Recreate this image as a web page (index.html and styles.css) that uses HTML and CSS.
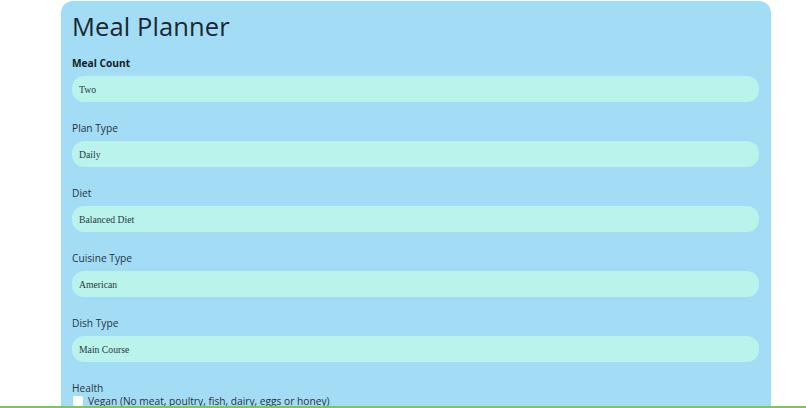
FILE: index.html
```html
<!DOCTYPE html>
<html lang="en">
<head>
<meta charset="utf-8">
<title>Meal Planner</title>
<link rel="stylesheet" href="styles.css">
</head>
<body>
<main class="card">
  <h1 class="title">Meal Planner</h1>
  <form class="form">
    <label class="label label-bold" for="count">Meal Count</label>
    <select class="field" id="count"><option>Two</option></select>

    <label class="label" for="plan">Plan Type</label>
    <select class="field" id="plan"><option>Daily</option></select>

    <label class="label" for="diet">Diet</label>
    <select class="field" id="diet"><option>Balanced Diet</option></select>

    <label class="label" for="cuisine">Cuisine Type</label>
    <select class="field" id="cuisine"><option>American</option></select>

    <label class="label" for="dish">Dish Type</label>
    <select class="field" id="dish"><option>Main Course</option></select>

    <div class="label">Health</div>
    <label class="check-row"><input type="checkbox" class="check"> Vegan (No meat, poultry, fish, dairy, eggs or honey)</label>
  </form>
</main>
<div class="bottom-line"></div>
</body>
</html>
```
FILE: styles.css
```css
html, body {
  margin: 0;
  padding: 0;
  background: #ffffff;
  height: 408px;
  overflow: hidden;
}
body {
  font-family: "Open Sans", "DejaVu Sans", sans-serif;
  color: #1d2a33;
}
.card {
  margin: 1px 0 0 61px;
  width: 710px;
  box-sizing: border-box;
  background: #a3dcf5;
  border-radius: 12px 12px 0 0;
  padding: 8px 12px 20px 11px;
}
.title {
  margin: 0;
  font-size: 25.5px;
  line-height: 34px;
  font-weight: 500;
  color: #1b2730;
  letter-spacing: 0.1px;
}
.form {
  display: flex;
  flex-direction: column;
  margin-top: 13px;
}
.label {
  font-size: 10.2px;
  line-height: 14px;
  margin-bottom: 6px;
  color: #26343d;
}
.label-bold {
  font-weight: 700;
  color: #111c24;
}
.field {
  appearance: none;
  -webkit-appearance: none;
  border: none;
  outline: none;
  height: 26px;
  border-radius: 12px;
  background: #b9f3ec;
  margin: 0 0 19px 0;
  padding: 0 7px;
  font-family: "Liberation Serif", "Times New Roman", serif;
  font-size: 9.7px;
  color: #2a3a40;
}
.check-row {
  display: flex;
  align-items: center;
  gap: 5px;
  margin-top: -7px;
  font-size: 10.2px;
  line-height: 14px;
  color: #26343d;
}
.check {
  appearance: none;
  -webkit-appearance: none;
  width: 10px;
  height: 10px;
  margin: 0 0 0 1px;
  background: #ffffff;
  border-radius: 2px;
  border: none;
}
.bottom-line {
  position: fixed;
  left: 0;
  right: 0;
  bottom: 0;
  height: 2px;
  background: #7dc753;
}
```
